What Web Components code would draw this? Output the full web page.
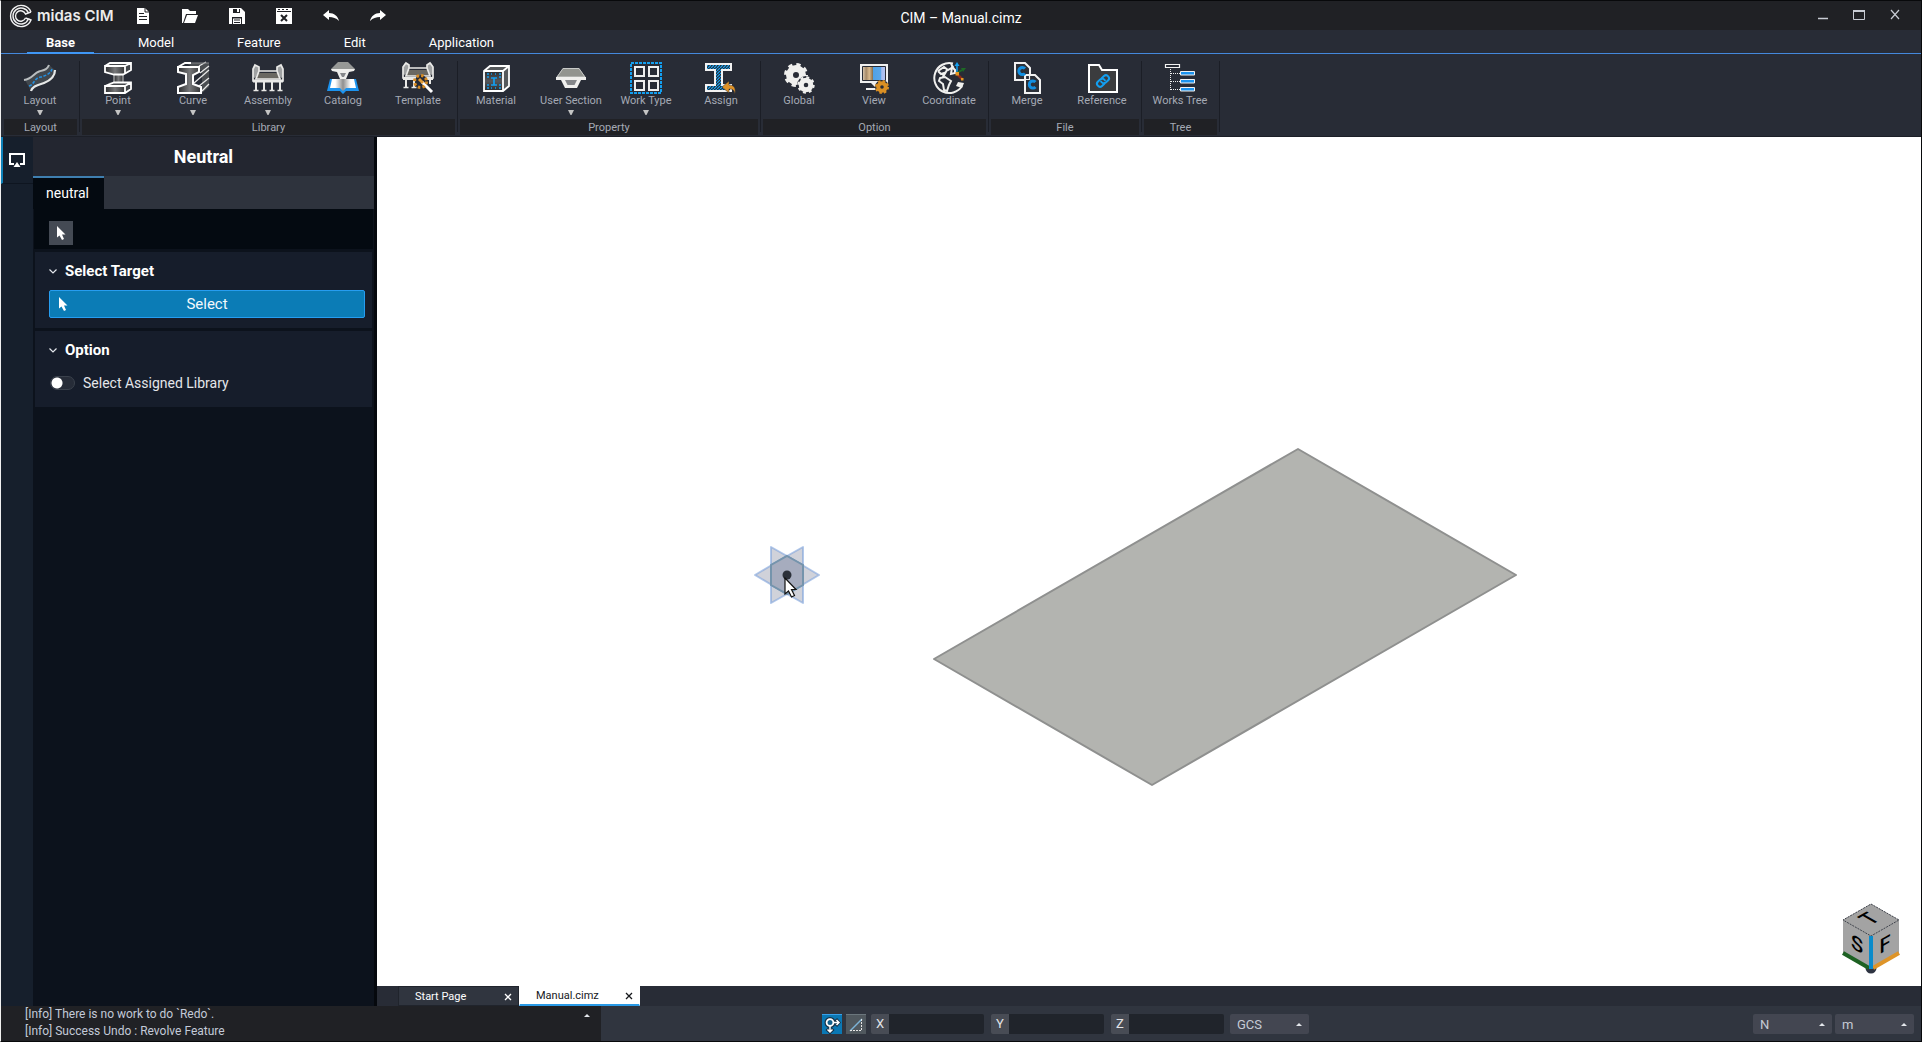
<!DOCTYPE html>
<html lang="en">
<head>
<meta charset="utf-8">
<title>CIM – Manual.cimz</title>
<style>
html, body { height: 100%; }
body { margin: 0; background: #000; font-family: Roboto, "Liberation Sans", sans-serif; }
</style>
</head>
<body>
<cim-app></cim-app>

<script>
const ICONS = {
  layout: [32, 32, `<path d="M1 18C8 18 10 12 15 10S24 9 25 3L31 8C31 16 26 20 21 21S12 22 7 29Z" fill="#41474d"/><path d="M5 24C10 23 10 17 15 15.500S26 13 28 7" fill="none" stroke="#2590e0" stroke-width="1.600" stroke-dasharray="3 1.500"/><path d="M0 18C8 17 10 11 15 9.500S23 8 25 3" fill="none" stroke="#b9bdbf" stroke-width="2"/><path d="M7 29C9 23 15 23 20 21S31 16 31 8" fill="none" stroke="#e6e8e8" stroke-width="2.200"/>`],
  point: [32, 32, `<defs><linearGradient id="a"><stop offset="0" stop-color="#2c2d2f"/><stop offset=".5" stop-color="#77787a"/><stop offset="1" stop-color="#333436"/></linearGradient></defs><path d="M12 9H21V24H12Z" fill="url(#a)"/><path d="M3 4L8 1H29V7L23 12H21V9L23 4ZM3 24L8 20H29V27L23 31H3Z" fill="#44474b"/><path d="M3 4H23V10L21 12H12L3 9Z" fill="url(#a)"/><path d="M3 24H23V31H3Z" fill="url(#a)"/><path d="M12 12V21M21 12V21" stroke="#c9cacb" stroke-width="1"/><path d="M3 4L8 1H29V8L24 11L21 12.500H12L3 10V4H23V11M23 4L29 1M3 24L12 20.500H29V27L23 31H3V24H23V31M23 24L29 20.500" fill="none" stroke="#fff" stroke-width="1.800"/>`],
  curve: [32, 32, `<defs><linearGradient id="a"><stop offset="0" stop-color="#2c2d2f"/><stop offset=".5" stop-color="#77787a"/><stop offset="1" stop-color="#333436"/></linearGradient></defs><path d="M9 1H32V25L25 31V8H20Z" fill="#4a4d51"/><path d="M1 5H22V10L16 13V22L24 25V31H1V25L9 22V12L1 10Z" fill="url(#a)"/><path d="M22 4L29 0M23 11L32 4M17 21L32 8M22 24L32 16M25 29L32 22" stroke="#e8e8e8" stroke-width="1.300"/><path d="M11 1H32" stroke="#85878a" stroke-width="1"/><path d="M1 5L8 1H14M1 5H22V10L16 13V22L24 25V31H1V25L9 22V12L1 10Z" fill="none" stroke="#fff" stroke-width="2"/>`],
  assembly: [32, 32, `<path d="M6 11H26L29 17H3Z" fill="#6a6862"/><path d="M3 3L7 5V10L3 16L1 15V6ZM29 3L25 5V10L29 16L31 15V6Z" fill="#9fa1a2"/><path d="M3 3L7 5V9H25V5L29 3L31 7V19H1V7ZM7 9L4 17H28L25 9" fill="none" stroke="#e9e9e7" stroke-width="1.700"/><path d="M1 19H31" stroke="#e9e9e7" stroke-width="3"/><path d="M4 20V28M12 20V28M20 20V28M28 20V28" stroke="#e9e9e7" stroke-width="2"/><path d="M1.500 28.500H6.500M9.500 28.500H14.500M17.500 28.500H22.500M25.500 28.500H30.500" stroke="#e9e9e7" stroke-width="1.500"/>`],
  catalog: [32, 32, `<defs><linearGradient id="g" x1="0" x2="1"><stop offset=".2" stop-color="#fff"/><stop offset=".5" stop-color="#8f8f8f"/><stop offset=".8" stop-color="#fff"/></linearGradient></defs><path d="M3 17H29L32 29H19L16 32L13 29H0Z" fill="#1c93ee"/><path d="M5 17H27L29 26H19L16 29L13 26H3Z" fill="url(#g)"/><path d="M11 0H21L28 7L26 9H6L4 7Z" fill="#969896"/><path d="M4 7H28L27 9L22 10L19 17H13L10 10L5 9Z" fill="#eeeeec"/><path d="M13 11H19L17 15H15Z" fill="#85878a"/>`],
  template: [32, 32, `<path d="M6 8H26L29 14H3Z" fill="#6a6862"/><path d="M3 1L7 3V8L3 13L1 12V4ZM29 1L25 3V8L29 13L31 12V4Z" fill="#9fa1a2"/><path d="M4 1L7 3V6H25V3L28 1L31 5V16H1V5ZM7 6L4 14H28L25 6" fill="none" stroke="#e9e9e7" stroke-width="1.700"/><path d="M1 16.500H31" stroke="#e9e9e7" stroke-width="3"/><path d="M4 17V25M12 17V25M28 17V22" stroke="#e9e9e7" stroke-width="2"/><path d="M1.500 25.500H6.500M9.500 25.500H14.500" stroke="#e9e9e7" stroke-width="1.500"/><circle cx="19" cy="19" r="6" fill="#282c36"/><path d="M20 19L30 30" stroke="#282c36" stroke-width="5"/><path d="M20 20L30 30" stroke="#fff" stroke-width="3"/><path d="M17 17L21 21" stroke="#e09a35" stroke-width="3"/><circle cx="18.500" cy="19.500" r="6" fill="none" stroke="#d98c22" stroke-width="3" stroke-dasharray="2.500 2.200"/>`],
  material: [32, 32, `<defs><linearGradient id="a" x2="0" y2="1"><stop offset="0" stop-color="#2c2d2f"/><stop offset=".5" stop-color="#55565a"/><stop offset="1" stop-color="#2c2d2f"/></linearGradient></defs><path d="M4 9L10 4H29V24L23 29H4Z" fill="#55585b"/><path d="M4 9H23V29H4Z" fill="url(#a)"/><path d="M4 9L10 4H29V24L23 29H4ZM4 9H23V29M23 9L29 4" fill="none" stroke="#fff" stroke-width="1.800"/><path d="M7 12H9M7 15H9M7 23H9M7 26H9M11 12H12M15 12H16M19 12H21M19 15H21M19 23H21M19 26H21M11 26H12M15 26H16M11 16H17M11 23H17M14 16V23" stroke="#139ff0" stroke-width="1.700"/>`],
  section: [32, 32, `<path d="M8 6H24L31 16H1Z" fill="#92948f"/><path d="M8 6.500H24L30 15H2Z" fill="none" stroke="#c8cac8"/><path d="M1 15H31V18H26L22 26H10L6 18H1Z" fill="#f0f0ee"/><path d="M10 18H22L19.500 23H12.500Z" fill="#85878a"/>`],
  worktype: [32, 32, `<path d="M1 1H31V31H1Z" fill="none" stroke="#139ff0" stroke-width="2" stroke-dasharray="3 1"/><path d="M5 5H14V14H5ZM19 5H28V14H19ZM5 19H14V28H5ZM19 19H28V28H19Z" fill="none" stroke="#efefef" stroke-width="2"/>`],
  assign: [32, 32, `<defs><pattern id="p" width="3" height="3" patternUnits="userSpaceOnUse"><path d="M0 3L3 0" stroke="#18a3f3" stroke-width="1.200"/></pattern></defs><path d="M1 2H26V8H17V23H26V29H1V23H10V8H1Z" fill="#23303e"/><path d="M1 2H26V8H17V23H26V29H1V23H10V8H1Z" fill="url(#p)" stroke="#f2f2f2" stroke-width="2"/><path d="M17 25L24 19V23C29 23 31 26 30 32C29 28 28 27 24 27V31Z" fill="#dd9228" stroke="#282c36" stroke-width=".5"/>`],
  global: [32, 32, `<g fill="none" stroke="#f0f0ee"><circle cx="13" cy="13" r="6.500" stroke-width="7"/><circle cx="13" cy="13" r="10.500" stroke-width="3" stroke-dasharray="4.250 4"/><circle cx="23" cy="23" r="7" stroke="#282c36" stroke-width="4"/><circle cx="23" cy="23" r="4.800" stroke-width="5"/><circle cx="23" cy="23" r="7.700" stroke-width="2" stroke-dasharray="3 3.050"/></g>`],
  view: [32, 32, `<defs><linearGradient id="v"><stop offset="0" stop-color="#f4e6d2"/><stop offset=".2" stop-color="#a58967"/><stop offset=".32" stop-color="#d9b98d"/><stop offset=".45" stop-color="#8c7350"/><stop offset=".47" stop-color="#4fa1e6"/><stop offset=".75" stop-color="#5aa7ea"/><stop offset=".8" stop-color="#a9bdf0"/><stop offset="1" stop-color="#b8c6f2"/></linearGradient></defs><path d="M3 3H29V20H3Z" fill="url(#v)" stroke="#f0f0f0" stroke-width="2"/><path d="M4.500 4.500H27.500V18.500H4.500Z" fill="none" stroke="#282c36"/><path d="M13 21H19V26H8V28H18V26" fill="#f0f0f0"/><circle cx="24" cy="25" r="7" fill="#282c36"/><circle cx="24" cy="25" r="3.800" fill="none" stroke="#db9024" stroke-width="4"/><circle cx="24" cy="25" r="6" fill="none" stroke="#db9024" stroke-width="2" stroke-dasharray="2.500 2.200"/>`],
  coordinate: [32, 32, `<path d="M20 1.500A15 15 0 1 0 29 24" fill="none" stroke="#f0f0ee" stroke-width="2"/><path d="M5 9L11 5L15 8L20 5L18 2M5 9L8 12L11 11L10 15L14 8M19 5L22 8V11L18 12Z" fill="none" stroke="#f0f0ee" stroke-width="2"/><path d="M7 16L12 15L18 19L16 23L14 29L11 28L10 22L6 19Z" fill="none" stroke="#f0f0ee" stroke-width="2"/><path d="M25 20L31 21L29 26L23 24Z" fill="#f0f0ee"/><path d="M24 11V3" stroke="#139ff0" stroke-width="1.500"/><path d="M21.500 4L24 0L26.500 4Z" fill="#139ff0"/><path d="M24 11L29 8" stroke="#1d6a25" stroke-width="2"/><path d="M28 6L33 6L30 10Z" fill="#1d6a25"/><path d="M24 12L29 17" stroke="#8c2c1a" stroke-width="2.500"/><rect x="22.500" y="10" width="3.500" height="3.500" fill="#e69722"/><rect x="28" y="16" width="2.500" height="2.500" fill="#e69722"/>`],
  merge: [32, 32, `<g fill="#2c3038" stroke="#f2f2f2" stroke-width="2"><path d="M4 1H14L19 6V18H4Z"/><path d="M14 13H24L29 18V31H14Z"/></g><g fill="none" stroke="#138fe0" stroke-width="3"><path d="M14 6.500A3.600 3.600 0 1 0 14 11.500"/><path d="M24.500 20A3.600 3.600 0 1 0 24.500 25"/></g><path d="M14.500 13.500H18.500V17.500H14.500Z" fill="#282c36" stroke="#f2f2f2" stroke-width="1.200"/>`],
  reference: [32, 32, `<path d="M3 3H13L16 8H31V30H3Z" fill="#3b3c3e" stroke="#fff" stroke-width="2"/><g transform="rotate(-42 17 19)" fill="none" stroke="#139ff0" stroke-width="2"><path d="M16.500 22H13A3 3 0 0 1 13 16H16A3 3 0 0 1 18.500 20.500"/><path d="M17.500 16H21A3 3 0 0 1 21 22H18A3 3 0 0 1 15.500 17.500"/></g>`],
  tree: [32, 32, `<path d="M1.500 2.500H15.500V5.500H1.500Z" fill="none" stroke="#f2f2f2" stroke-width="1.200"/><path d="M6.500 7V28M7 11.500H16M7 19.500H16M7 27.500H16" fill="none" stroke="#eee" stroke-dasharray="1 1"/><path d="M16.500 9.500H30.500V13H16.500ZM16.500 17.500H30.500V21H16.500ZM16.500 25.500H30.500V29H16.500Z" fill="#1c93ee" stroke="#f2f2f2"/>`],
  newfile: [16, 16, `<path d="M2 0H10L14 4V16H2Z" fill="#fff"/><path d="M10 0V4H14" fill="none" stroke="#202125" stroke-width="1"/><path d="M4 5.500H9M4 8.500H12M4 11.500H12" stroke="#202125"/>`],
  open: [16, 16, `<path d="M0 1H6L8 3H14V6H4L1 15H0Z" fill="#fff"/><path d="M5 7H16L13 15H2Z" fill="#fff"/>`],
  save: [16, 16, `<path d="M0 0H12L16 4V16H13V9H3V16H0ZM4 1V5H11V1Z" fill="#fff" fill-rule="evenodd"/><path d="M8 1H10V4H8ZM4 10.500H12V16H4Z" fill="#fff"/><path d="M5 12H11M5 14.500H11" stroke="#202125"/>`],
  closefile: [16, 16, `<path d="M0 0H16V16H0Z" fill="#fff"/><path d="M1 3.500H15" stroke="#202125"/><path d="M2 1.500H4M6 1.500H8M10 1.500H12" stroke="#202125"/><path d="M5 7L11 13M11 7L5 13" stroke="#202125" stroke-width="2"/>`],
  undo: [16, 16, `<path d="M0 7L6 2V5C11 5 15 8 16 13C13 10 10 9 6 9V12Z" fill="#fff"/>`],
  redo: [16, 16, `<path d="M16 7L10 2V5C5 5 1 8 0 13C3 10 6 9 10 9V12Z" fill="#fff"/>`],
  logo: [24, 24, `<g fill="none" stroke="#f0f0f0" stroke-width="1.400"><path d="M22 8A10.600 10.600 0 1 0 22 16L19.500 15"/><path d="M22 8L16.500 10A5.200 5.200 0 1 0 16.500 14"/><path d="M19.400 9A8 8 0 1 0 19.400 15L16.500 14"/></g>`],
  min: [10, 10, `<path d="M0 8.500H10" stroke="#c8ccd4" stroke-width="1.500"/>`],
  max: [12, 10, `<path d="M.5 .5H11.500V9.500H.5Z" fill="none" stroke="#c8ccd4"/><path d="M0 1H12" stroke="#c8ccd4" stroke-width="2"/>`],
  close: [10, 10, `<path d="M1 0L9 9M9 0L1 9" stroke="#c8ccd4" stroke-width="1.200"/>`],
  tabclose: [8, 8, `<path d="M1 1L7 7M7 1L1 7" stroke="currentColor" stroke-width="1.300"/>`],
  screen: [16, 14, `<path d="M5 11H1V1H15V11H11" fill="none" stroke="#fff" stroke-width="2"/><path d="M8 9L11.500 14H4.500Z" fill="#fff"/>`],
  pointer: [10, 14, `<path d="M1 0V11.500L3.500 9.500L6 14L8 13L6 8.500H9.500Z" fill="#fff"/>`],
  chevron: [8, 5, `<path d="M.5 .5L4 4L7.500 .5" fill="none" stroke="#e4e7ec" stroke-width="1.200"/>`],
  down: [6, 5, `<path d="M0 0H6L3.500 5H2.500Z" fill="#c4c4c4"/>`],
  up: [6, 3, `<path d="M3 0L6 3H0Z" fill="#e4e7ec"/>`],
  snap: [20, 20, `<path d="M10 7H17M8 9V18M14 4L17 7.500L14 11M4.500 14L8 17.500L11.500 14" fill="none" stroke="#183044" stroke-width="3"/><circle cx="8" cy="7.500" r="4" fill="#1b4766" stroke="#183044" stroke-width="3"/><path d="M11 7.500H17M8 11V17M14.500 5L17 7.500L14.500 10M5.500 14.500L8 17L10.500 14.500" fill="none" stroke="#fff" stroke-width="1.500"/><circle cx="8" cy="7.500" r="3.400" fill="#12608c" stroke="#fff" stroke-width="1.800"/>`],
  slope: [20, 20, `<path d="M4 16L16 4" stroke="#7db4d8" stroke-width="1.500"/><path d="M4 15.500H15.500V4" fill="none" stroke="#e6e6e6" stroke-dasharray="2 1"/>`]
};

function define(tag, markup, setup) {
  const template = document.createElement('template');
  template.innerHTML = `<style>*{box-sizing:border-box} button,input,select{font:inherit;color:inherit;margin:0;border:0;border-radius:0;padding:0;background:none}</style>` + markup;
  customElements.define(tag, class extends HTMLElement {
    constructor() {
      super();
      this.attachShadow({ mode: 'open' }).append(template.content.cloneNode(true));
    }
    connectedCallback() { if (setup) setup(this, this.shadowRoot); }
  });
}

define('cim-icon', `<style>:host{display:inline-block;flex:none;line-height:0}svg{display:block;overflow:visible}</style><span></span>`, (el, root) => {
  const [w, h, body] = ICONS[el.getAttribute('name')];
  root.querySelector('span').innerHTML = `<svg width="${w}" height="${h}" viewBox="0 0 ${w} ${h}" aria-hidden="true">${body}</svg>`;
});

define('title-bar', `<style>
:host{display:grid;grid-template-columns:1fr auto 1fr;height:29px;background:#202125;color:#fff}
.left,.brand,.tools,.win{display:flex;align-items:center}
.brand{padding-left:8px;gap:4px;width:114px;font:600 15px/20px Inter,sans-serif;color:#ececec;white-space:nowrap}
.tools{padding-left:20px;gap:31px}
.tools button,.win button{display:grid;place-items:center;height:16px}
h1{margin:0;font-size:14px;font-weight:400;line-height:16px;align-self:center;padding-top:4px}
.win{justify-content:flex-end;gap:25px;padding:0 21px 2px 0}
</style>
<div class="left"><div class="brand"><cim-icon name="logo"></cim-icon><span>midas CIM</span></div>
<div class="tools">
<button aria-label="New"><cim-icon name="newfile"></cim-icon></button><button aria-label="Open"><cim-icon name="open"></cim-icon></button><button aria-label="Save"><cim-icon name="save"></cim-icon></button><button aria-label="Close file"><cim-icon name="closefile"></cim-icon></button><button aria-label="Undo"><cim-icon name="undo"></cim-icon></button><button aria-label="Redo"><cim-icon name="redo"></cim-icon></button>
</div></div>
<h1>CIM – Manual.cimz</h1>
<div class="win"><button aria-label="Minimize"><cim-icon name="min"></cim-icon></button><button aria-label="Maximize"><cim-icon name="max"></cim-icon></button><button aria-label="Close"><cim-icon name="close"></cim-icon></button></div>`);

define('menu-bar', `<style>
:host{display:block;background:#282c36;border-bottom:1px solid #4488dc}
nav{display:flex;gap:25px;padding-left:26px;height:23px}
</style><nav><slot></slot></nav>`);

define('menu-tab', `<style>
:host{display:block}
button{height:24px;padding:3px 19px 0;font-size:13px;line-height:18px;color:#fff;border-bottom:2px solid transparent}
:host([active]) button{font-weight:700;border-color:#3f97f5}
</style><button><slot></slot></button>`);

define('ribbon-bar', `<style>
:host{display:flex;background:#282c36;height:83px;padding-left:2px;border-bottom:1px solid #1c1f27}
</style><slot></slot>`);

define('ribbon-group', `<style>
:host{display:flex;color:#a4a9b4;font-size:11px}
.body{display:flex;flex-direction:column}
.items{display:flex;height:65px}
.name{margin:0 1px;height:16px;line-height:17px;background:#202125;text-align:center}
.rule{width:1px;margin:7px 1px 4px;background:#1b1e26}
</style><div class="body"><div class="items"><slot></slot></div><div class="name"></div></div><div class="rule"></div>`,
(el, root) => { root.querySelector('.name').textContent = el.getAttribute('label'); });

define('ribbon-button', `<style>
:host{display:block}
button{display:flex;flex-direction:column;align-items:center;width:75px;height:65px;padding:8px 1px 0 0;line-height:13px}
.arrow{margin-top:3px;display:none}
:host([menu]) .arrow{display:block}
</style><button><span class="glyph"></span><span><slot></slot></span><cim-icon class="arrow" name="down"></cim-icon></button>`,
(el, root) => {
  const glyph = document.createElement('cim-icon');
  glyph.setAttribute('name', el.getAttribute('icon'));
  root.querySelector('.glyph').replaceChildren(glyph);
  root.querySelector('.glyph').style.lineHeight = 0;
});

define('side-rail', `<style>
:host{display:block;width:32px;flex:none;background:#161f2c}
button{display:grid;place-items:center;width:32px;height:47px;padding-right:2px;border-left:2px solid #0d80b8;border-bottom:1px solid #0e1520}
</style><button aria-label="Work panel"><cim-icon name="screen"></cim-icon></button>`);

define('panel-section', `<style>
:host{display:block;margin:0 2px 3px;padding:8px 7px 10px 14px;background:#161d2b}
h3{display:flex;align-items:center;gap:8px;margin:0;height:22px;font-size:15px;font-weight:700;line-height:22px;color:#fff}
.content{height:28px;margin-top:8px;display:flex;align-items:center}
::slotted(*){flex:1}
</style><h3><cim-icon name="chevron"></cim-icon><span></span></h3><div class="content"><slot></slot></div>`,
(el, root) => { root.querySelector('h3 span').textContent = el.getAttribute('label'); });

define('action-button', `<style>
:host{display:block}
button{display:grid;grid-template-columns:1fr auto 1fr;align-items:center;width:100%;height:28px;padding:0 8px;border:1px solid #269df0;border-radius:2px;background:#0b7cb6;color:#f4f8fb;font-size:15px}
</style><button><cim-icon name="pointer"></cim-icon><span><slot></slot></span></button>`);

define('toggle-switch', `<style>
:host{display:block}
label{display:flex;align-items:center;gap:8px;font-size:14px;line-height:20px;color:#e4e6ea}
input{appearance:none;width:25px;height:14px;margin-left:1px;border:1px solid #3a414c;border-radius:7px;background:radial-gradient(circle at 6px 6px,#fff 5px,transparent 6px) #262c38}
</style><label for="t"><input type="checkbox" id="t"><span><slot></slot></span></label>`);

define('work-panel', `<style>
:host{display:block;width:341px;flex:none;background:#0c121c;color:#fff}
h2{margin:0;height:39px;line-height:39px;text-align:center;font-size:18px;font-weight:700;background:#232630}
.tabs{display:flex;height:33px;background:#2e333d}
.tabs button{width:71px;border-top:2px solid #3f7fb0;background:#040a11;font-size:14px;padding:0 2px 2px 0}
.tools{height:40px;margin:0 1px 3px;padding:12px 15px;background:#040a11}
.tools button{display:grid;place-items:center;width:24px;height:24px;background:#444a54}
</style><h2>Neutral</h2><div class="tabs"><button>neutral</button></div>
<div class="tools"><button aria-label="Pick"><cim-icon name="pointer"></cim-icon></button></div>
<panel-section label="Select Target"><action-button>Select</action-button></panel-section>
<panel-section label="Option"><toggle-switch>Select Assigned Library</toggle-switch></panel-section>`);

define('view-cube', `<style>:host{display:block}svg{display:block;overflow:visible}text{font:500 20px Roboto,sans-serif;text-anchor:middle}</style>
<svg width="60" height="70" viewBox="0 0 60 70" role="img" aria-label="View cube">
<circle cx="30" cy="66" r="5.500" fill="#2d3342"/>
<path d="M30 2L58 18V51L30 66L2 51V18Z" fill="#a3a3a3"/>
<path d="M30 2L58 18L30 34L2 18Z" fill="#a3a3a3" stroke="#3f434c" stroke-dasharray="2 1"/>
<path d="M2 51L28 66" stroke="#1d6122" stroke-width="4"/><path d="M32 66L58 51" stroke="#de9428" stroke-width="4"/>
<path d="M30 34V67" stroke="#0a8bcb" stroke-width="4"/>
<text transform="translate(16 42) skewY(30)" y="7">S</text><text transform="translate(44 42) skewY(-30)" y="7">F</text><text transform="translate(29 17) rotate(-30) skewX(30)" y="6" font-size="16">T</text>
</svg>`);

define('model-view', `<style>
:host{display:block;position:relative;flex:1;min-height:0;background:#fff}
.scene{display:block;width:100%;height:100%}
view-cube{position:absolute;right:20px;bottom:14px}
</style>
<svg class="scene" viewBox="0 0 1544 849" role="img" aria-label="Model">
<path d="M921 312L1139 438L775 648L557 522Z" fill="#b3b4b0" stroke="#8f908f" stroke-width="2" stroke-linejoin="round"/>
<g fill="#565e7b" fill-opacity=".28" stroke="#7fa4dc" stroke-opacity=".6" stroke-width="2" stroke-linejoin="round"><path d="M378 438L410 419L442 438L410 457Z"/><path d="M394 410L426 428V466L394 448Z"/><path d="M426 410V448L394 466V428Z"/></g>
<path d="M410 419L426 428V448L410 457L394 448V428Z" fill="#a6acbe" stroke="#7594ac" stroke-width="2"/>
<circle cx="410" cy="438" r="4.500" fill="#2b303a"/>
<path d="M408 441V457L411.500 454L414.500 460L417.500 458.500L414.500 452.500H419Z" fill="#fff" stroke="#111" stroke-width="1.200"/>
</svg><view-cube></view-cube>`);

define('document-tabs', `<style>
:host{display:flex;height:20px;padding-left:21px;background:#282c36}
</style><slot></slot>`);

define('document-tab', `<style>
:host{display:flex;align-items:center;justify-content:space-between;width:121px;padding:1px 6px 0 16px;font-size:11px;background:#30353f;color:#fff;border:1px solid #20242c;box-sizing:border-box}
:host([active]){background:#fff;color:#16181c;border-color:#fff;border-bottom:2px solid #2a9ae6}
button{display:block;line-height:16px}
.x{display:grid;place-items:center;width:8px;height:16px}
</style><button><slot></slot></button><button class="x" aria-label="Close tab"><cim-icon name="tabclose"></cim-icon></button>`);

define('coord-field', `<style>
:host{display:flex;height:20px;border-radius:2px;overflow:hidden}
label{width:18px;background:#484c55;color:#e2e4e8;font-size:13px;line-height:20px;text-align:center}
input{width:95px;background:#20242b;padding:0 4px;font-size:12px}
</style><label for="v"></label><input id="v" type="text">`,
(el, root) => { root.querySelector('label').textContent = el.getAttribute('axis'); });

define('drop-select', `<style>
:host{display:grid;width:79px;height:20px;align-items:center;background:#434651;border-radius:2px}
select,cim-icon{grid-area:1/1}
select{appearance:none;width:100%;height:20px;padding:0 7px;font-size:13px;color:#c6cbd5}
cim-icon{justify-self:end;margin-right:7px;pointer-events:none}
</style><select><option></option></select><cim-icon name="up"></cim-icon>`,
(el, root) => {
  root.querySelector('option').textContent = el.getAttribute('value');
  root.querySelector('select').setAttribute('aria-label', el.getAttribute('label'));
});

define('status-bar', `<style>
:host{display:flex;height:35px;background:#30353f;color:#fff}
.log{width:600px;flex:none;display:flex;justify-content:space-between;padding:0 11px 0 24px;background:#202125;font-size:12px;line-height:17px;color:#c3cad8}
.log p{margin:0}
.log button{display:grid;place-items:center;height:19px}
.coords,.units{display:flex;align-items:center}
.coords{padding:1px 0 0 221px;gap:7px}
.modes{display:flex;gap:4px;margin-right:-2px}
.modes button{width:20px;height:20px;background:#0b78b4;border-top:1px solid #39a0e8}
.modes button+button{background:#50585e;border-color:#6b767c}
.coords drop-select{margin-left:-1px}
.units{margin-left:auto;gap:3px;padding:1px 7px 0 0}
</style>
<div class="log"><div><p>[Info] There is no work to do \`Redo\`.</p><p>[Info] Success Undo : Revolve Feature</p></div><button aria-label="Expand log"><cim-icon name="up"></cim-icon></button></div>
<div class="coords"><div class="modes"><button aria-label="Snap"><cim-icon name="snap"></cim-icon></button><button aria-label="Slope"><cim-icon name="slope"></cim-icon></button></div>
<coord-field axis="X"></coord-field><coord-field axis="Y"></coord-field><coord-field axis="Z"></coord-field><drop-select value="GCS" label="Coordinate system"></drop-select></div>
<div class="units"><drop-select value="N" label="Force unit"></drop-select><drop-select value="m" label="Length unit"></drop-select></div>`);

define('cim-app', `<style>
:host{display:flex;flex-direction:column;height:100vh;box-sizing:border-box;border:1px solid #08090b;border-left-color:#f0f0f0;background:#05080d}
main{display:flex;flex:1;min-height:0}
.stage{display:flex;flex-direction:column;flex:1;min-width:0;margin-left:3px}
</style>
<title-bar></title-bar>
<menu-bar><menu-tab active>Base</menu-tab><menu-tab>Model</menu-tab><menu-tab>Feature</menu-tab><menu-tab>Edit</menu-tab><menu-tab>Application</menu-tab></menu-bar>
<ribbon-bar>
<ribbon-group label="Layout"><ribbon-button icon="layout" menu>Layout</ribbon-button></ribbon-group>
<ribbon-group label="Library"><ribbon-button icon="point" menu>Point</ribbon-button><ribbon-button icon="curve" menu>Curve</ribbon-button><ribbon-button icon="assembly" menu>Assembly</ribbon-button><ribbon-button icon="catalog">Catalog</ribbon-button><ribbon-button icon="template">Template</ribbon-button></ribbon-group>
<ribbon-group label="Property"><ribbon-button icon="material">Material</ribbon-button><ribbon-button icon="section" menu>User Section</ribbon-button><ribbon-button icon="worktype" menu>Work Type</ribbon-button><ribbon-button icon="assign">Assign</ribbon-button></ribbon-group>
<ribbon-group label="Option"><ribbon-button icon="global">Global</ribbon-button><ribbon-button icon="view">View</ribbon-button><ribbon-button icon="coordinate">Coordinate</ribbon-button></ribbon-group>
<ribbon-group label="File"><ribbon-button icon="merge">Merge</ribbon-button><ribbon-button icon="reference">Reference</ribbon-button></ribbon-group>
<ribbon-group label="Tree"><ribbon-button icon="tree">Works Tree</ribbon-button></ribbon-group>
</ribbon-bar>
<main><side-rail></side-rail><work-panel></work-panel>
<div class="stage"><model-view></model-view><document-tabs><document-tab>Start Page</document-tab><document-tab active>Manual.cimz</document-tab></document-tabs></div></main>
<status-bar></status-bar>`);
</script>
</body>
</html>
